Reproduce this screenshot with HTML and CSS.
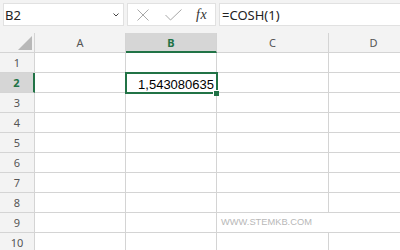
FILE: index.html
```html
<!DOCTYPE html>
<html>
<head>
<meta charset="utf-8">
<link rel="stylesheet" href="styles.css">
</head>
<body>
<div class="app">
  <div class="bar">
    <div class="namebox">
      <span>B2</span>
      <svg class="chev" width="6" height="4" viewBox="0 0 6 4"><polyline points="0.5,0.5 3,3 5.5,0.5" fill="none" stroke="#444" stroke-width="1"/></svg>
    </div>
    <div class="fxbox">
      <svg class="ico-x" width="12" height="12" viewBox="0 0 12 12"><path d="M0.5 0.5 L11.5 11.5 M11.5 0.5 L0.5 11.5" stroke="#a8a8a8" stroke-width="1" fill="none"/></svg>
      <svg class="ico-ok" width="17" height="12" viewBox="0 0 17 12"><polyline points="0.5,6 5.5,11 16.5,0.5" stroke="#a8a8a8" stroke-width="1" fill="none"/></svg>
      <span class="fx">fx</span>
    </div>
    <div class="formula">=COSH(1)</div>
  </div>
  <div class="sheet">
    <div class="grid">
      <div class="h corner"><span class="tri"></span></div>
      <div class="h">A</div>
      <div class="h on">B</div>
      <div class="h">C</div>
      <div class="h">D</div>

      <div class="r">1</div><div class="c"></div><div class="c"></div><div class="c"></div><div class="c"></div>
      <div class="r on">2</div><div class="c"></div><div class="c num">1,543080635</div><div class="c"></div><div class="c"></div>
      <div class="r">3</div><div class="c"></div><div class="c"></div><div class="c"></div><div class="c"></div>
      <div class="r">4</div><div class="c"></div><div class="c"></div><div class="c"></div><div class="c"></div>
      <div class="r">5</div><div class="c"></div><div class="c"></div><div class="c"></div><div class="c"></div>
      <div class="r">6</div><div class="c"></div><div class="c"></div><div class="c"></div><div class="c"></div>
      <div class="r">7</div><div class="c"></div><div class="c"></div><div class="c"></div><div class="c"></div>
      <div class="r">8</div><div class="c"></div><div class="c"></div><div class="c"></div><div class="c"></div>
      <div class="r">9</div><div class="c"></div><div class="c"></div><div class="c"></div><div class="c"></div>
      <div class="r">10</div><div class="c"></div><div class="c"></div><div class="c"></div><div class="c"></div>
    </div>
    <div class="sel"><span class="handle"></span></div>
    <div class="wm">WWW.STEMKB.COM</div>
  </div>
</div>
</body>
</html>
```

FILE: styles.css
```css
* { box-sizing: border-box; }
html, body { margin: 0; padding: 0; }
body {
  width: 400px;
  height: 250px;
  overflow: hidden;
  background: #f3f3f3;
  font-family: "Noto Sans", "Open Sans", sans-serif;
}
.app { width: 400px; height: 250px; overflow: hidden; }

.bar {
  display: flex;
  align-items: flex-start;
  gap: 3px;
  height: 33px;
  padding: 3px 0 0 3px;
  background: #f3f3f3;
}
.namebox, .fxbox, .formula {
  height: 23px;
  background: #fff;
  border: 1px solid #e1e1e1;
  display: flex;
  align-items: center;
}
.namebox {
  width: 121px;
  flex: none;
  justify-content: space-between;
  padding: 0 4px 0 1px;
  font-size: 13px;
  color: #222;
}
.chev { display: block; margin-top: 1px; }
.fxbox {
  width: 89px;
  flex: none;
  padding-left: 9px;
}
.ico-x { display: block; }
.ico-ok { display: block; margin-left: 16px; }
.fx {
  margin-left: 14px;
  font-family: "Liberation Serif", serif;
  font-style: italic;
  font-size: 14px;
  color: #333;
  letter-spacing: 0.5px;
}
.formula {
  flex: 1;
  padding-left: 2px;
  font-size: 13px;
  color: #222;
  border-right: none;
}

.sheet { position: relative; width: 420px; }
.grid {
  display: grid;
  grid-template-columns: 35px 91px 91px 112px 90px;
  grid-auto-rows: 20px;
}
.h, .r, .c {
  border-right: 1px solid #d4d4d4;
  border-bottom: 1px solid #d4d4d4;
}
.h {
  background: #f3f3f3;
  font-size: 11px;
  color: #555;
  display: flex;
  align-items: center;
  justify-content: center;
}
.h.corner { position: relative; }
.tri {
  position: absolute;
  right: 2px;
  bottom: 2px;
  width: 0;
  height: 0;
  border-left: 14px solid transparent;
  border-bottom: 14px solid #b8b8b8;
}
.h.on {
  background: #d6d6d6;
  color: #217346;
  font-weight: 700;
  border-bottom: 2px solid #217346;
}
.r {
  background: #f3f3f3;
  font-size: 11px;
  color: #555;
  display: flex;
  align-items: center;
  justify-content: center;
}
.r.on {
  background: #d6d6d6;
  color: #217346;
  font-weight: 700;
  border-right: 2px solid #217346;
}
.c { background: #fff; }
.num {
  font-family: "Liberation Sans", Arial, sans-serif;
  font-size: 13px;
  color: #000;
  text-align: right;
  padding: 4px 2px 0 0;
  line-height: 15px;
}

.sel {
  position: absolute;
  left: 125px;
  top: 39px;
  width: 93px;
  height: 22px;
  border: 2px solid #217346;
}
.handle {
  position: absolute;
  left: 86px;
  top: 16px;
  width: 6px;
  height: 6px;
  background: #217346;
  border-left: 1px solid #fff;
  border-top: 1px solid #fff;
}
.wm {
  position: absolute;
  left: 217px;
  top: 180px;
  width: 183px;
  height: 19px;
  background: #fff;
  padding-left: 4px;
  font-family: "Liberation Sans", Arial, sans-serif;
  font-size: 9.3px;
  line-height: 19px;
  color: #b8b8b8;
}
```
